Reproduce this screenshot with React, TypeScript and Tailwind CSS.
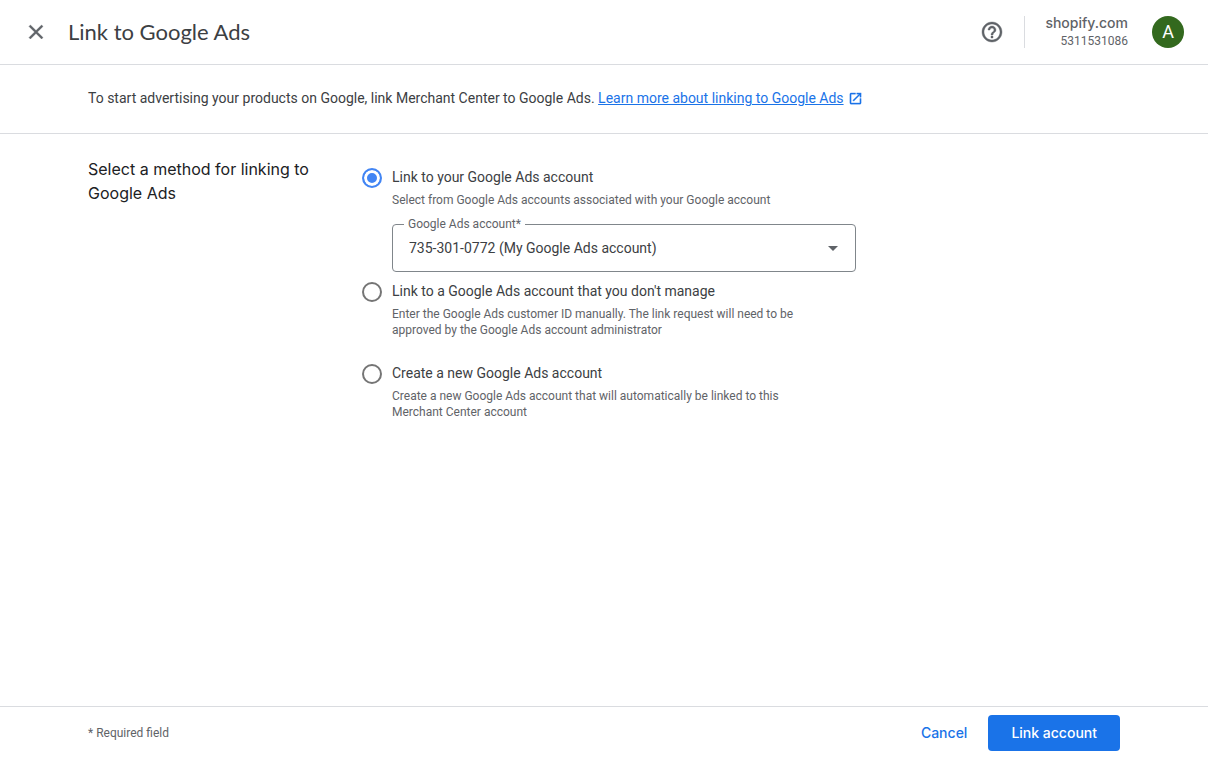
import React, { useState } from 'react';

type Method = 'own' | 'other' | 'new';

const ACCOUNTS = ['735-301-0772 (My Google Ads account)'];

function CloseIcon() {
  return (
    <svg viewBox="0 0 24 24" className="size-6" fill="currentColor" stroke="currentColor" strokeWidth={0.4} aria-hidden="true">
      <path d="M19 6.41L17.59 5 12 10.59 6.41 5 5 6.41 10.59 12 5 17.59 6.41 19 12 13.41 17.59 19 19 17.59 13.41 12z" />
    </svg>
  );
}

function HelpIcon() {
  return (
    <svg viewBox="0 0 24 24" className="size-6" fill="currentColor" stroke="currentColor" strokeWidth={0.4} aria-hidden="true">
      <path d="M11 18h2v-2h-2v2zm1-16C6.48 2 2 6.48 2 12s4.48 10 10 10 10-4.48 10-10S17.52 2 12 2zm0 18c-4.41 0-8-3.59-8-8s3.59-8 8-8 8 3.59 8 8-3.59 8-8 8zm0-14c-2.21 0-4 1.79-4 4h2c0-1.1.9-2 2-2s2 .9 2 2c0 2-3 1.75-3 5h2c0-2.25 3-2.5 3-5 0-2.21-1.79-4-4-4z" />
    </svg>
  );
}

function OpenInNewIcon() {
  return (
    <svg viewBox="0 0 24 24" className="size-[15px]" fill="currentColor" stroke="currentColor" strokeWidth={0.5} aria-hidden="true">
      <path d="M19 19H5V5h7V3H5c-1.11 0-2 .9-2 2v14c0 1.1.89 2 2 2h14c1.1 0 2-.9 2-2v-7h-2v7zM14 3v2h3.59l-9.83 9.83 1.41 1.41L19 6.41V10h2V3h-7z" />
    </svg>
  );
}

type OptionProps = {
  id: Method;
  title: string;
  description: string;
  selected: Method;
  onSelect: (id: Method) => void;
  children?: React.ReactNode;
};

function MethodOption({ id, title, description, selected, onSelect, children }: OptionProps) {
  return (
    <div className="flex gap-2.5">
      <input
        type="radio"
        id={id}
        name="method"
        checked={selected === id}
        onChange={() => onSelect(id)}
        aria-describedby={`${id}-description`}
        className="mt-0.5 size-5 shrink-0 appearance-none rounded-full border-2 border-[#757575] checked:border-[#4285f4] checked:bg-[#4285f4] checked:shadow-[inset_0_0_0_3px_white]"
      />
      <div className="min-w-0 flex-1">
        <label htmlFor={id} className="block text-sm leading-[22px] text-[#3c4043]">
          {title}
        </label>
        <p id={`${id}-description`} className="mt-1 max-w-[432px] text-xs text-[#5f6368]">
          {description}
        </p>
        {children}
      </div>
    </div>
  );
}

export default function App() {
  const [method, setMethod] = useState<Method>('own');
  const [account, setAccount] = useState(ACCOUNTS[0]);

  return (
    <div className="flex min-h-screen flex-col bg-white font-['Roboto',sans-serif] text-[#3c4043]">
      {/* Top bar */}
      <header className="flex h-[65px] items-center border-b border-[#dadce0] px-6">
        <button type="button" aria-label="Close" className="text-[#5f6368]">
          <CloseIcon />
        </button>
        <h1 className="ml-5 font-['Lato',sans-serif] text-[22px] leading-7">Link to Google Ads</h1>
        <div className="ml-auto flex items-center">
          <button type="button" aria-label="Help" className="text-[#5f6368]">
            <HelpIcon />
          </button>
          <div className="ml-5 h-8 border-l border-[#dadce0]" />
          <div className="ml-5 text-right text-[#5f6368]">
            <div className="font-['Inter',sans-serif] text-sm leading-[18px] font-medium">shopify.com</div>
            <div className="text-xs leading-[18px]">5311531086</div>
          </div>
          <button
            type="button"
            aria-label="Account"
            className="ml-6 size-8 rounded-full bg-[#33691e] text-lg text-white"
          >
            A
          </button>
        </div>
      </header>

      {/* Intro */}
      <section className="flex h-[69px] items-center border-b border-[#dadce0] px-22 pb-0.5">
        <p className="text-sm">
          To start advertising your products on Google, link Merchant Center to Google Ads.{' '}
          <a href="#learn-more" className="inline-flex items-center gap-1 text-[#1a73e8]">
            <span className="underline">Learn more about linking to Google Ads</span>
            <OpenInNewIcon />
          </a>
        </p>
      </section>

      {/* Linking method */}
      <main className="flex flex-1 gap-8 px-22 pt-[23px]">
        <h2 id="method-heading" className="w-[242px] shrink-0 font-['Inter',sans-serif] text-base text-[#202124]">
          Select a method for linking to Google Ads
        </h2>
        <div
          role="radiogroup"
          aria-labelledby="method-heading"
          className="flex max-w-[494px] flex-1 flex-col pt-[9px]"
        >
          <MethodOption
            id="own"
            title="Link to your Google Ads account"
            description="Select from Google Ads accounts associated with your Google account"
            selected={method}
            onSelect={setMethod}
          >
            <fieldset className="mt-2 rounded-sm border border-[#80868b] px-[11px]">
              <legend className="px-1 text-xs text-[#5f6368]">
                <label htmlFor="account">Google Ads account*</label>
              </legend>
              <div className="flex items-center">
                <select
                  id="account"
                  required
                  value={account}
                  onChange={(e) => setAccount(e.target.value)}
                  className="h-[39px] w-full appearance-none bg-transparent pr-8 pb-2 pl-[5px] text-sm outline-none"
                >
                  {ACCOUNTS.map((name) => (
                    <option key={name}>{name}</option>
                  ))}
                </select>
                <svg
                  viewBox="0 0 10 5"
                  className="pointer-events-none mb-1.5 -ml-4 h-[5px] w-2.5 shrink-0 fill-[#5f6368]"
                  aria-hidden="true"
                >
                  <path d="M0 0h10L5 5z" />
                </svg>
              </div>
            </fieldset>
          </MethodOption>
          <div className="mt-2">
            <MethodOption
              id="other"
              title="Link to a Google Ads account that you don't manage"
              description="Enter the Google Ads customer ID manually. The link request will need to be approved by the Google Ads account administrator"
              selected={method}
              onSelect={setMethod}
            />
          </div>
          <div className="mt-6">
            <MethodOption
              id="new"
              title="Create a new Google Ads account"
              description="Create a new Google Ads account that will automatically be linked to this Merchant Center account"
              selected={method}
              onSelect={setMethod}
            />
          </div>
        </div>
      </main>

      {/* Actions */}
      <footer className="flex h-[53px] items-center border-t border-[#dadce0] px-22">
        <p className="text-xs text-[#5f6368]">* Required field</p>
        <div className="ml-auto flex items-center gap-3 font-['Inter',sans-serif] text-sm font-medium">
          <button type="button" className="h-9 px-[9px] text-[#1a73e8]">
            Cancel
          </button>
          <button type="button" className="h-9 rounded-sm bg-[#1a73e8] px-[23px] text-white">
            Link account
          </button>
        </div>
      </footer>
    </div>
  );
}
